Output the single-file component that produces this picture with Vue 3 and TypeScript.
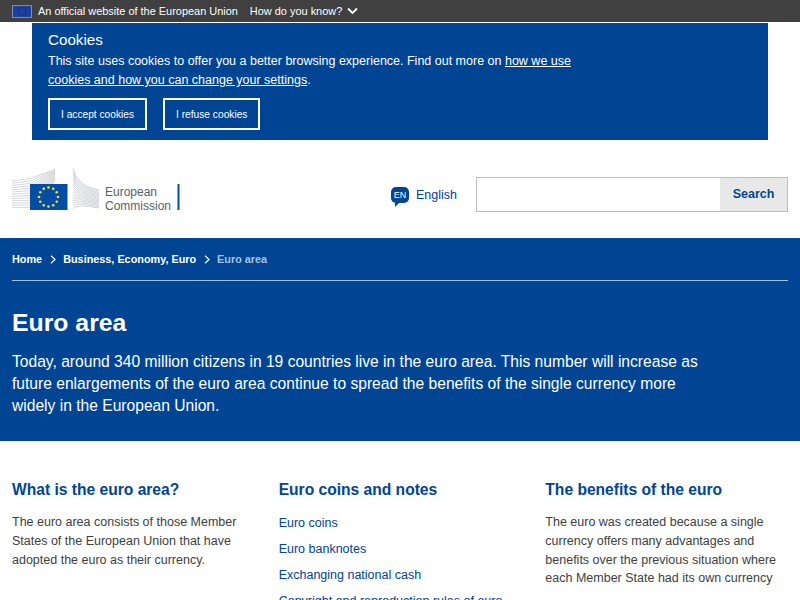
<script setup lang="ts">
const stars = Array.from({ length: 12 }, (_, i) => {
  const a = (i * Math.PI) / 6
  return { x: +(48.5 + 9.5 * Math.sin(a)).toFixed(2), y: +(197 - 9.5 * Math.cos(a)).toFixed(2) }
})
const flagStars = Array.from({ length: 12 }, (_, i) => {
  const a = (i * Math.PI) / 6
  return { x: +(11 + 4.4 * Math.sin(a)).toFixed(2), y: +(7 - 4.4 * Math.cos(a)).toFixed(2) }
})
const leftLines = Array.from({ length: 13 }, (_, i) => i)
const rightLines = Array.from({ length: 16 }, (_, i) => i)
const links = [
  'Euro coins',
  'Euro banknotes',
  'Exchanging national cash',
  'Copyright and reproduction rules of euro'
]
</script>

<template>
  <div class="page">
    <div class="topbar">
      <svg class="topbar__flag" width="20" height="13" viewBox="0 0 22 14">
        <rect x="0.5" y="0.5" width="21" height="13" fill="#1c3f9c" stroke="#7f96d8" stroke-width="1" />
        <circle v-for="(s, i) in flagStars" :key="i" :cx="s.x" :cy="s.y" r="0.6" fill="#0b1f66" />
      </svg>
      <span>An official website of the European Union</span>
      <span class="topbar__how">How do you know?</span>
      <svg width="11" height="8" viewBox="0 0 11 8" class="topbar__chevron">
        <path d="M1 1.5 L5.5 6 L10 1.5" fill="none" stroke="#fff" stroke-width="1.8" />
      </svg>
    </div>

    <section class="cookies">
      <h2>Cookies</h2>
      <p>
        This site uses cookies to offer you a better browsing experience. Find out more on
        <a href="#">how we use cookies and how you can change your settings</a>.
      </p>
      <div class="cookies__actions">
        <button type="button">I accept cookies</button>
        <button type="button">I refuse cookies</button>
      </div>
    </section>

    <header class="site-header">
      <div class="logo">
        <svg width="170" height="50" viewBox="12 167 170 50" class="logo__mark">
          <g stroke="#c9cdd1" stroke-width="0.8" fill="none">
            <path
              v-for="i in leftLines"
              :key="'l' + i"
              :d="`M12 ${181 + i * 2.2} L30 ${181 + i * 2.2 - (12 - i) * 0.2} L55 ${176 - (12 - i) * 0.55 + i * 0.4}`"
            />
            <path
              v-for="i in rightLines"
              :key="'r' + i"
              :d="`M73 ${168 + i * 2.7} Q77 ${186 + i * 1.2} 99 ${190 + i * 1.2}`"
            />
          </g>
          <rect x="30" y="184" width="37.5" height="26" fill="#034ea2" />
          <circle v-for="(s, i) in stars" :key="i" :cx="s.x" :cy="s.y" r="1.3" fill="#f6d93b" />
          <rect x="177.5" y="184" width="2" height="26" fill="#034ea2" />
        </svg>
        <div class="logo__text">European<br />Commission</div>
      </div>
      <div class="lang">
        <span class="lang__badge">EN</span>
        <span class="lang__name">English</span>
      </div>
      <div class="search">
        <span class="search__input"></span>
        <span class="search__btn">Search</span>
      </div>
    </header>

    <section class="hero">
      <nav class="crumbs">
        <a href="#">Home</a>
        <svg width="6" height="9" viewBox="0 0 6 9"><path d="M1 .8 L5 4.5 L1 8.2" fill="none" stroke="#fff" stroke-width="1.2" /></svg>
        <a href="#">Business, Economy, Euro</a>
        <svg width="6" height="9" viewBox="0 0 6 9"><path d="M1 .8 L5 4.5 L1 8.2" fill="none" stroke="#fff" stroke-width="1.2" /></svg>
        <span>Euro area</span>
      </nav>
      <h1>Euro area</h1>
      <p>
        Today, around 340 million citizens in 19 countries live in the euro area. This number will increase as
        future enlargements of the euro area continue to spread the benefits of the single currency more
        widely in the European Union.
      </p>
    </section>

    <main class="cols">
      <div class="col">
        <h3>What is the euro area?</h3>
        <p>The euro area consists of those Member States of the European Union that have adopted the euro as their currency.</p>
      </div>
      <div class="col">
        <h3>Euro coins and notes</h3>
        <ul>
          <li v-for="l in links" :key="l"><a href="#">{{ l }}</a></li>
        </ul>
      </div>
      <div class="col">
        <h3>The benefits of the euro</h3>
        <p>The euro was created because a single currency offers many advantages and benefits over the previous situation where each Member State had its own currency</p>
      </div>
    </main>
  </div>
</template>

<style>
html,
body {
  margin: 0;
  overflow: hidden;
  background: #fff;
}
</style>

<style scoped>
.page {
  width: 800px;
  height: 600px;
  overflow: hidden;
  font-family: "Liberation Sans", Arial, sans-serif;
  color: #404040;
}

.topbar {
  height: 22px;
  background: #404040;
  color: #fff;
  font-size: 10.95px;
  display: flex;
  align-items: center;
  padding-left: 12px;
  box-sizing: border-box;
}

.topbar__flag {
  margin-right: 6px;
}

.topbar__how {
  margin-left: 12px;
}

.topbar__chevron {
  margin-left: 5px;
}

.cookies {
  margin: 1px 32px 0;
  height: 117px;
  box-sizing: border-box;
  background: #004494;
  color: #fff;
  padding: 8px 16px 0;
}

.cookies h2 {
  margin: 0;
  font-size: 15.2px;
  font-weight: 400;
  line-height: 18px;
}

.cookies p {
  margin: 3px 0 0;
  width: 540px;
  font-size: 12.5px;
  line-height: 19px;
}

.cookies a {
  color: #fff;
}

.cookies__actions {
  display: flex;
  gap: 16px;
  margin-top: 8px;
}

.cookies button {
  height: 32px;
  padding: 0 11px;
  background: transparent;
  border: 2px solid #fff;
  color: #fff;
  font: 10.2px "Liberation Sans", Arial, sans-serif;
}

.site-header {
  height: 98px;
  box-sizing: border-box;
  padding: 11px 12px 0 0;
  display: flex;
  align-items: center;
}

.logo {
  position: relative;
  width: 391px;
  height: 50px;
  flex: none;
  margin-bottom: 5px;
  padding-left: 12px;
  box-sizing: border-box;
}

.logo__mark {
  display: block;
}

.logo__text {
  position: absolute;
  left: 105px;
  top: 19px;
  font-size: 12px;
  line-height: 13.5px;
  color: #5a6066;
}

.lang {
  display: flex;
  align-items: center;
  gap: 7px;
  width: 85px;
  flex: none;
}

.lang__badge {
  position: relative;
  width: 18px;
  height: 16px;
  background: #004494;
  color: #fff;
  border-radius: 5px;
  font-size: 9px;
  line-height: 16px;
  text-align: center;
}

.lang__badge::after {
  content: "";
  position: absolute;
  left: 4px;
  bottom: -4px;
  border-left: 4px solid #004494;
  border-bottom: 4px solid transparent;
}

.lang__name {
  color: #004494;
  font-size: 12.5px;
}

.search {
  flex: 1;
  height: 35px;
  display: flex;
  border: 1px solid #bdbdbd;
  box-sizing: border-box;
}

.search__input {
  flex: 1;
}

.search__btn {
  width: 67px;
  background: #e8e8e8;
  color: #004494;
  font-size: 12.5px;
  font-weight: 700;
  text-align: center;
  line-height: 33px;
}

.hero {
  height: 203px;
  box-sizing: border-box;
  background: #004494;
  color: #fff;
  padding: 0 12px;
}

.crumbs {
  height: 43px;
  box-sizing: border-box;
  border-bottom: 1px solid #a5bcd8;
  display: flex;
  align-items: center;
  gap: 7.5px;
  font-size: 10.85px;
  font-weight: 700;
}

.crumbs a {
  color: #fff;
  text-decoration: none;
}

.crumbs span {
  color: #a9c0e0;
}

.hero h1 {
  margin: 27px 0 0;
  font-size: 24.8px;
  line-height: 30px;
  font-weight: 700;
}

.hero p {
  margin: 12.5px 0 0;
  width: 700px;
  font-size: 15.62px;
  line-height: 22px;
}

.cols {
  display: grid;
  grid-template-columns: repeat(3, 1fr);
  gap: 24px;
  padding: 39px 12px 0;
}

.col {
  min-width: 0;
}

.col h3 {
  margin: 0 0 13px;
  color: #004494;
  font-size: 15.6px;
  line-height: 20px;
  font-weight: 700;
}

.col p {
  margin: 0;
  font-size: 12.5px;
  line-height: 18.8px;
}

.col ul {
  margin: -3.5px 0 0;
  padding: 0;
  list-style: none;
}

.col li {
  font-size: 12.5px;
  line-height: 26px;
}

.col a {
  color: #004494;
  text-decoration: none;
}
</style>
